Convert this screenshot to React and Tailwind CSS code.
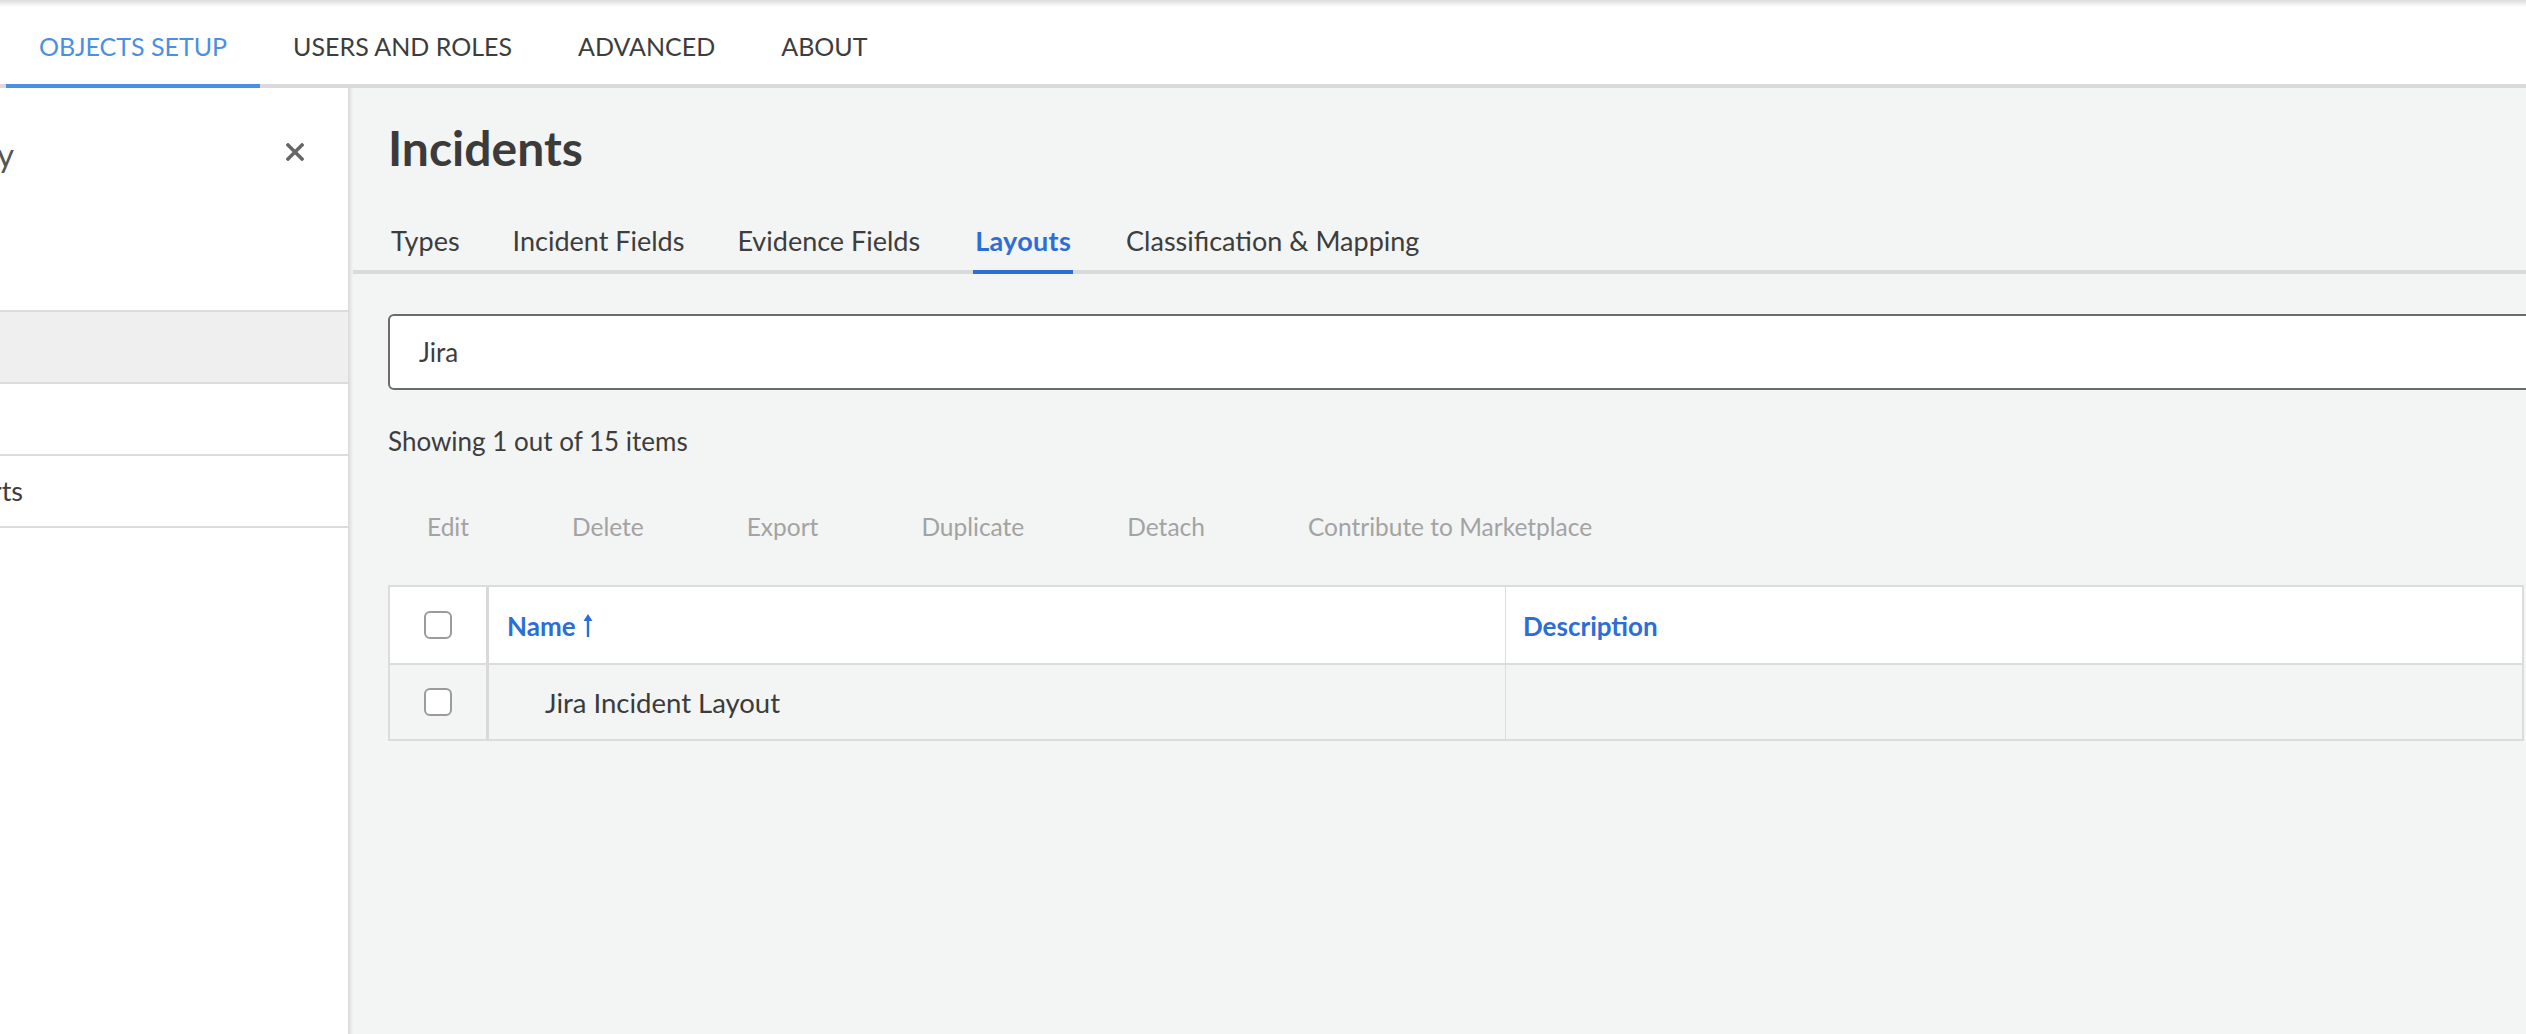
import { useState } from "react";

const topTabs = ["OBJECTS SETUP", "USERS AND ROLES", "ADVANCED", "ABOUT"];
const subTabs = ["Types", "Incident Fields", "Evidence Fields", "Layouts", "Classification & Mapping"];
const actions = ["Edit", "Delete", "Export", "Duplicate", "Detach", "Contribute to Marketplace"];

const Checkbox = () => (
  <div className="w-[28px] h-[28px] rounded-[6px] border-2 border-[#9b9b9b] bg-white" />
);

const SortArrow = () => (
  <svg width="12" height="26" viewBox="0 0 12 26" className="ml-[6px] text-[#2c6ed5]">
    <path d="M6 1 L10.5 8 H7.2 V24 H4.8 V8 H1.5 Z" fill="currentColor" />
  </svg>
);

// clips a word so only its tail is visible, like the scrolled side panel
const Clipped = ({ width, children, className }) => (
  <div className={`flex justify-end overflow-hidden ${className}`} style={{ width }}>
    <span className="whitespace-nowrap">{children}</span>
  </div>
);

export default function App() {
  const [activeTop] = useState(0);
  const [activeSub] = useState(3);

  return (
    <div className="w-[2526px] h-[1034px] overflow-hidden flex flex-col bg-white font-[Lato,sans-serif] text-[#3d3d3d]">
      {/* top shadow */}
      <div className="h-[7px] bg-gradient-to-b from-[#dcdcdc] to-white" />

      {/* Top navigation */}
      <nav className="h-[81px] flex items-stretch border-b-4 border-[#dadada] pl-[6px]">
        {topTabs.map((tab, i) => (
          <div
            key={tab}
            className={`flex items-center pt-[3px] px-[33px] -mb-1 border-b-4 text-[25px] ${
              i === activeTop ? "border-[#4a90e2] text-[#4a90e2]" : "border-transparent text-[#3d3d3d]"
            }`}
          >
            {tab}
          </div>
        ))}
      </nav>

      <div className="flex flex-1 min-h-0">
        {/* Side panel */}
        <aside className="w-[348px] bg-white flex flex-col">
          <div className="h-[222px] flex items-start justify-between pt-[46px] pr-[44px]">
            <Clipped width="14px" className="text-[33px] text-[#555] leading-[40px]">
              Library
            </Clipped>
            <svg width="18" height="18" viewBox="0 0 18 18" className="mt-[9px] text-[#666]">
              <path d="M2 2 L16 16 M16 2 L2 16" stroke="currentColor" strokeWidth="3.5" strokeLinecap="square" />
            </svg>
          </div>
          <div className="h-[72px] border-t-2 border-[#dcdcdc] bg-[#efefef]" />
          <div className="h-[72px] border-t-2 border-[#dcdcdc]" />
          <div className="h-[72px] border-t-2 border-[#dcdcdc] flex items-center">
            <Clipped width="23px" className="text-[27px] leading-[34px] text-[#3d3d3d]">
              Reports
            </Clipped>
          </div>
          <div className="border-t-2 border-[#dcdcdc]" />
        </aside>
        <div className="w-[5px] bg-gradient-to-r from-[#d9d9d9] to-[#f3f4f4]" />

        {/* Main content */}
        <main className="flex-1 min-w-0 overflow-hidden bg-[#f3f4f4] flex flex-col">
          <h1 className="pl-[35px] pt-[31px] text-[48px] leading-[1.2] font-bold text-[#3b3b3b]">Incidents</h1>

          <div className="mt-[47px] flex gap-[53px] pl-[38px] border-b-4 border-[#dadada]">
            {subTabs.map((tab, i) => (
              <div
                key={tab}
                className={`-mb-1 pb-[12px] border-b-4 text-[27px] leading-[34px] ${
                  i === activeSub
                    ? "border-[#2c6ed5] text-[#2c6ed5] font-bold px-[2px] tracking-[0.3px]"
                    : "border-transparent text-[#3d3d3d]"
                }`}
              >
                {tab}
              </div>
            ))}
          </div>

          <div className="pl-[35px] flex flex-col">
            <div className="mt-[40px] w-[2300px] h-[76px] border-2 border-[#6b6b6b] rounded-[6px] bg-white flex items-center pl-[29px] pt-[2px] text-[26px] text-[#3d3d3d]">
              Jira
            </div>

            <p className="mt-[35px] text-[26px] leading-[32px] text-[#3d3d3d]">Showing 1 out of 15 items</p>

            <div className="mt-[54px] flex gap-[103px] pl-[39px] text-[24.5px] leading-[32px] text-[#a3a3a3]">
              {actions.map((a) => (
                <span key={a}>{a}</span>
              ))}
            </div>

            {/* Table */}
            <div className="mt-[42px] w-[2136px] border-2 border-[#dcdcdc] text-[26px]">
              <div className="grid grid-cols-[99px_1017px_1fr] h-[78px] bg-white border-b-2 border-[#dcdcdc]">
                <div className="flex items-center justify-center border-r-[3px] border-[#d9d9d9]">
                  <Checkbox />
                </div>
                <div className="flex items-center pl-[18px] pt-[3px] border-r border-[#dcdcdc] font-bold text-[#2c6ed5]">
                  Name
                  <SortArrow />
                </div>
                <div className="flex items-center pl-[17px] pt-[3px] font-bold text-[#2c6ed5]">Description</div>
              </div>
              <div className="grid grid-cols-[99px_1017px_1fr] h-[74px] bg-[#f3f4f4]">
                <div className="flex items-center justify-center border-r-[3px] border-[#d9d9d9]">
                  <Checkbox />
                </div>
                <div className="flex items-center pl-[56px] pt-[3px] border-r border-[#dcdcdc] text-[27.5px] text-[#3b3b3b]">
                  Jira Incident Layout
                </div>
                <div />
              </div>
            </div>
          </div>
        </main>
      </div>
    </div>
  );
}
